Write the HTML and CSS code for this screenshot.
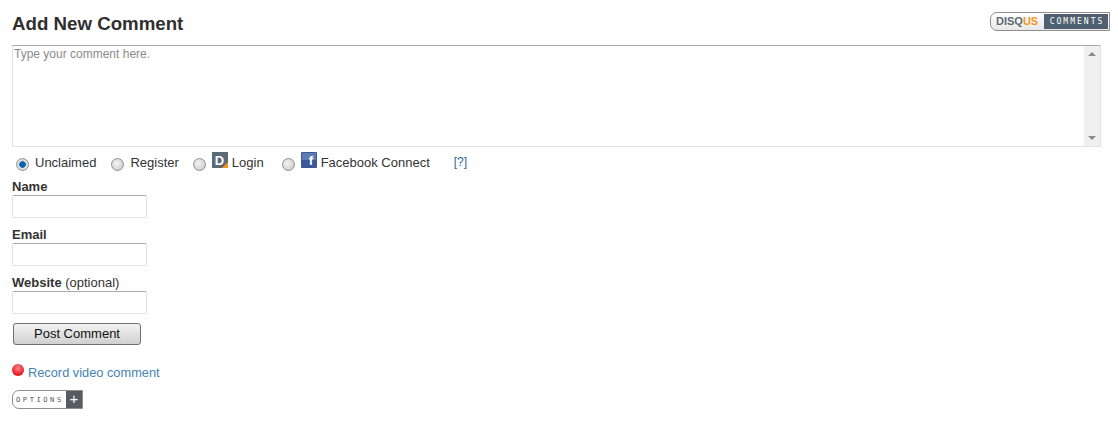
FILE: index.html
```html
<!DOCTYPE html>
<html lang="en">
<head>
  <meta charset="UTF-8" />
  <title>Add New Comment</title>
  <link rel="stylesheet" href="styles.css">
</head>
<body>
  <div class="comments">
    <div class="header">
      <h1>Add New Comment</h1>
      <div class="badge">
        <span class="badge-name">DISQ<span class="badge-us">US</span></span>
        <span class="badge-label">COMMENTS</span>
      </div>
    </div>

    <div class="comment-box">
      <textarea placeholder="Type your comment here."></textarea>
      <div class="scrollbar">
        <span class="arrow-up"></span>
        <span class="arrow-down"></span>
      </div>
    </div>

    <div class="auth">
      <label class="auth-item item-unclaimed"><input type="radio" name="auth" checked /><span>Unclaimed</span></label>
      <label class="auth-item item-register"><input type="radio" name="auth" /><span>Register</span></label>
      <label class="auth-item item-login">
        <input type="radio" name="auth" />
        <svg class="icon" width="16" height="16" viewBox="0 0 16 16">
          <rect width="16" height="16" fill="#5b6b75" />
          <path d="M16 10v6h-6z" fill="#f7941d" />
          <text x="7.5" y="12.5" text-anchor="middle" class="icon-d">D</text>
        </svg>
        <span>Login</span>
      </label>
      <label class="auth-item item-facebook">
        <input type="radio" name="auth" />
        <svg class="icon" width="16" height="16" viewBox="0 0 16 16">
          <rect width="16" height="16" rx="1" fill="#3b5998" />
          <rect x="1" y="1" width="14" height="7" fill="#5f7ab3" />
          <text x="10" y="13" text-anchor="middle" class="icon-f">f</text>
        </svg>
        <span>Facebook Connect</span>
      </label>
      <a class="help" href="#">[?]</a>
    </div>

    <div class="field">
      <label for="name"><strong>Name</strong></label>
      <input type="text" id="name" />
    </div>
    <div class="field">
      <label for="email"><strong>Email</strong></label>
      <input type="text" id="email" />
    </div>
    <div class="field">
      <label for="website"><strong>Website</strong> (optional)</label>
      <input type="text" id="website" />
    </div>

    <button class="post">Post Comment</button>

    <div class="video">
      <span class="record-dot"></span>
      <a href="#">Record video comment</a>
    </div>

    <div class="options">
      <span class="options-name">OPTIONS</span>
      <span class="options-plus">+</span>
    </div>
  </div>
</body>
</html>
```

FILE: styles.css
```css
body {
  margin: 0;
  background: #fff;
  font-family: "Liberation Sans", Arial, sans-serif;
  font-size: 13px;
  color: #333;
}

.comments {
  padding: 0 17px 0 12px;
}

.header {
  display: flex;
  justify-content: space-between;
  align-items: flex-start;
  height: 45px;
}

h1 {
  margin: 13px 0 0;
  font-size: 18.7px;
  line-height: 22px;
  font-weight: bold;
  color: #2f2f2f;
}

.badge {
  display: flex;
  margin: 12px -9px 0 0;
  height: 19px;
  border: 1px solid #8e8e8e;
  border-radius: 7px 0 0 7px;
  box-sizing: border-box;
  background: linear-gradient(#fff, #e8e8e8);
}

.badge-name {
  width: 52px;
  padding-left: 5px;
  box-sizing: border-box;
  font-size: 11px;
  line-height: 17px;
  font-weight: bold;
  color: #5b6b75;
}

.badge-us {
  color: #f7941d;
}

.badge-label {
  width: 64px;
  margin: 1px;
  padding-left: 2px;
  box-sizing: border-box;
  background: #4f6170;
  color: #fff;
  font-family: "DejaVu Sans Mono", monospace;
  font-size: 8px;
  line-height: 15px;
  letter-spacing: 2px;
  text-align: center;
}

.comment-box {
  display: flex;
  height: 102px;
  border: 1px solid #dfe3e8;
  border-top: 1px solid #a8a8a8;
  box-sizing: border-box;
}

.comment-box textarea {
  flex: 1;
  border: none;
  outline: none;
  resize: none;
  padding: 1px;
  font-family: "Liberation Sans", Arial, sans-serif;
  font-size: 12px;
}

.comment-box textarea::placeholder {
  color: #8b8b8b;
}

.scrollbar {
  display: flex;
  flex-direction: column;
  justify-content: space-between;
  align-items: center;
  width: 16px;
  padding: 6px 0;
  box-sizing: border-box;
  background: #f0f0f0;
}

.arrow-up,
.arrow-down {
  width: 0;
  height: 0;
  border-left: 4px solid transparent;
  border-right: 4px solid transparent;
}

.arrow-up {
  border-bottom: 4px solid #8a8a8a;
}

.arrow-down {
  border-top: 4px solid #8a8a8a;
}

.auth {
  display: flex;
  align-items: center;
  height: 30px;
  padding-left: 4px;
}

.auth-item {
  display: flex;
  align-items: center;
}

.auth-item input {
  appearance: none;
  width: 13px;
  height: 13px;
  margin: 4px 6px 0 0;
  border: 1px solid #8f8f8f;
  border-radius: 50%;
  background: radial-gradient(circle at 40% 40%, #f4f4f4, #c4c4c4);
  box-sizing: border-box;
}

.auth-item input:checked {
  background: radial-gradient(circle, #0a66a8 0 3px, #dcdcdc 3.5px);
}

.icon {
  margin: -4px 4px 0 0;
}

.icon-d {
  font-family: "Liberation Sans", Arial, sans-serif;
  font-size: 13px;
  font-weight: bold;
  fill: #fff;
}

.icon-f {
  font-family: "Liberation Sans", Arial, sans-serif;
  font-size: 13px;
  font-weight: bold;
  fill: #fff;
}

.item-unclaimed {
  margin-right: 15px;
}

.item-register {
  margin-right: 14px;
}

.item-login {
  margin-right: 18px;
}

.help {
  margin: -1px 0 0 24px;
  font-size: 12px;
  color: #2a6496;
  text-decoration: none;
}

.field {
  height: 48px;
}

.field label {
  display: block;
  height: 18px;
  line-height: 20px;
}

.field input {
  display: block;
  width: 135px;
  height: 23px;
  padding: 2px;
  border: 1px solid #dfe3e8;
  border-top-color: #a8a8a8;
  border-radius: 2px;
  box-sizing: border-box;
  outline: none;
}

.post {
  display: block;
  width: 128px;
  height: 22px;
  margin: 2px 0 0 1px;
  padding: 0 0 2px;
  border: 1px solid #707070;
  border-radius: 3px;
  background: linear-gradient(#f2f2f2, #d0d0d0);
  font-family: "Liberation Sans", Arial, sans-serif;
  font-size: 13px;
  color: #111;
}

.video {
  display: flex;
  align-items: center;
  margin-top: 17px;
  height: 20px;
}

.video a {
  color: #4682b4;
  font-size: 12.8px;
  text-decoration: none;
}

.record-dot {
  width: 12px;
  height: 12px;
  margin: -4px 4px 0 0;
  border-radius: 50%;
  background: radial-gradient(circle at 50% 35%, #ff8a8a, #e8141c 70%);
}

.options {
  display: flex;
  align-items: center;
  width: 71px;
  height: 19px;
  margin-top: 8px;
  border: 1px solid #8e8e8e;
  border-radius: 7px 0 0 7px;
  box-sizing: border-box;
}

.options-name {
  flex: 1;
  padding-left: 3px;
  font-family: "DejaVu Sans Mono", monospace;
  font-size: 7px;
  letter-spacing: 2.6px;
  color: #555;
}

.options-plus {
  width: 16px;
  height: 17px;
  background: #555b60;
  color: #fff;
  font-size: 15px;
  line-height: 16px;
  text-align: center;
}
```
